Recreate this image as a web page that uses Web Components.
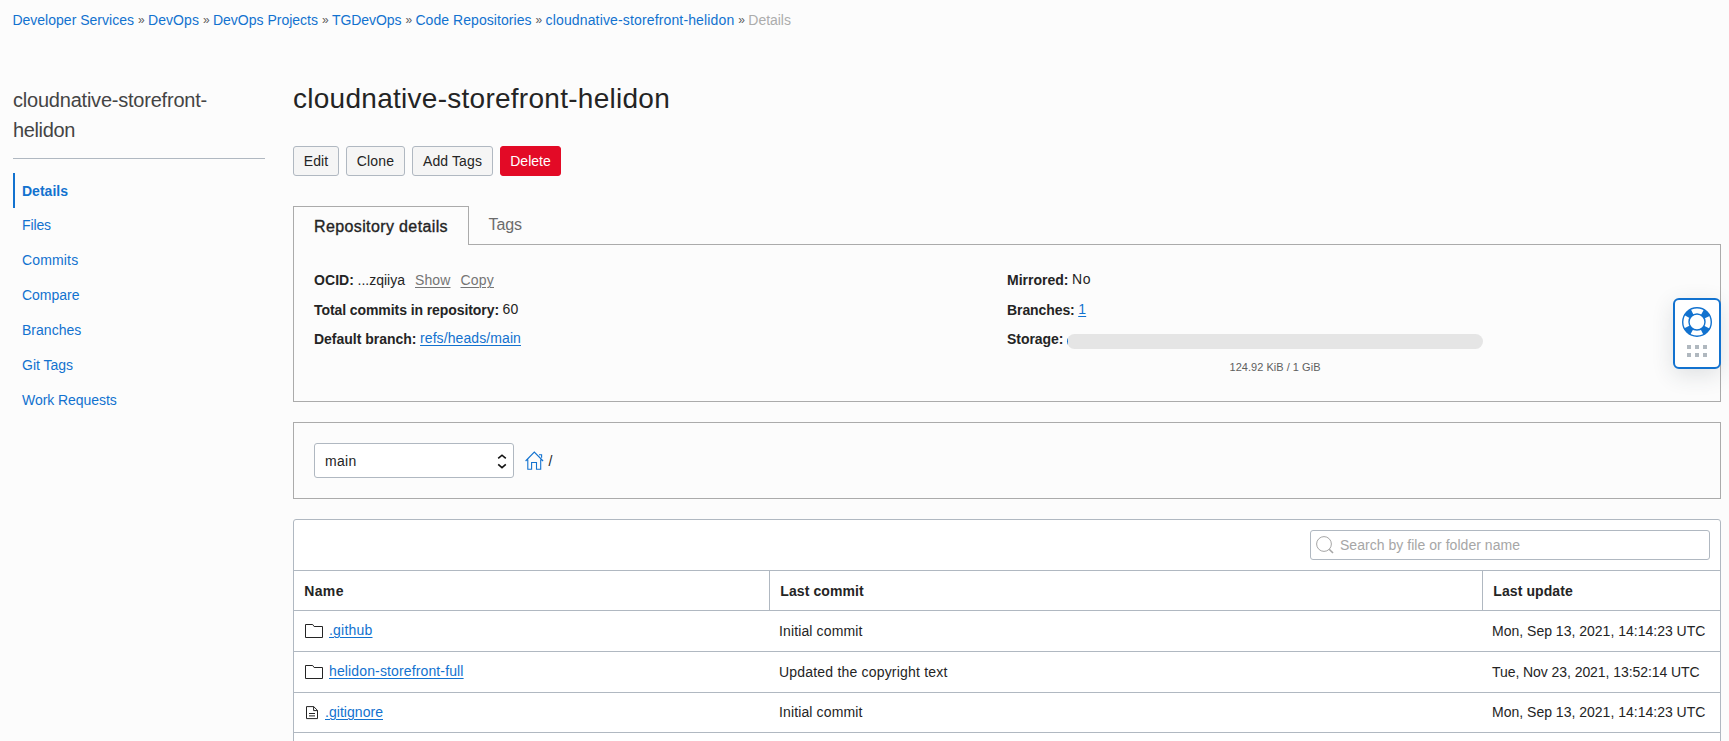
<!DOCTYPE html>
<html lang="en">
<head>
<meta charset="utf-8">
<title>cloudnative-storefront-helidon</title>
<style>
html,body{margin:0;height:100%;overflow:hidden}
body{background:#fcfcfc;color:#242424;font:14px/20px "Liberation Sans",Arial,sans-serif}
</style>
</head>
<body>
<repo-page></repo-page>
<script>
const make = (name, html, init) => customElements.define(name, class extends HTMLElement {
  connectedCallback() {
    if (this.shadowRoot) return;
    const t = document.createElement('template');
    t.innerHTML = html;
    this.attachShadow({mode: 'open'}).append(t.content.cloneNode(true));
    if (init) init(this, this.shadowRoot);
  }
});

/* Single-line label whose tracking is adjusted to a given width. */
make('fit-text', `<style>:host{display:inline-block;white-space:nowrap;flex:none}span{display:inline-block}
:host([link]) span{color:#1272cf}
:host([underline]) span{text-decoration:underline;text-underline-offset:2px;text-decoration-thickness:1px}</style><span><slot></slot></span>`, (el, root) => {
  const s = root.querySelector('span'), w = +el.getAttribute('w');
  if (!w) return;
  const n = el.textContent.length;
  s.style.letterSpacing = ((w - s.getBoundingClientRect().width) / n) + 'px';
  el.style.width = w + 'px';
});

make('bread-crumbs', `<style>:host{display:flex;height:20px;padding:10px 0 0 12.4px;gap:4px}
.s{width:6px;color:#5c5c5c;font-size:12px;text-align:center}.c{color:#acacac}</style>
<fit-text link w="121.6">Developer Services</fit-text><span class="s">»</span>
<fit-text link w="51">DevOps</fit-text><span class="s">»</span>
<fit-text link w="105">DevOps Projects</fit-text><span class="s">»</span>
<fit-text link w="69.4">TGDevOps</fit-text><span class="s">»</span>
<fit-text link w="116.2">Code Repositories</fit-text><span class="s">»</span>
<fit-text link w="188.8">cloudnative-storefront-helidon</fit-text><span class="s">»</span>
<fit-text class="c" w="42.5">Details</fit-text>`);

make('nav-item', `<style>:host{display:block;height:35px;line-height:35px;padding-left:9px;color:#1272cf;box-sizing:border-box}
:host([active]){border-left:2px solid #1272cf;padding-left:7px;font-weight:bold;line-height:36px}</style><slot></slot>`);

make('side-nav', `<style>:host{display:block;width:252px;margin-left:13px;padding-top:55px}
h2{margin:0;font-size:20px;line-height:30px;font-weight:300;color:#444;height:73px;border-bottom:1px solid #b0b8c1;margin-bottom:14px}
h2 fit-text{display:block}</style>
<h2><fit-text w="194">cloudnative-storefront-</fit-text><fit-text w="62">helidon</fit-text></h2>
<nav-item active><fit-text w="46">Details</fit-text></nav-item>
<nav-item><fit-text w="29">Files</fit-text></nav-item>
<nav-item><fit-text w="56.3">Commits</fit-text></nav-item>
<nav-item><fit-text w="57.5">Compare</fit-text></nav-item>
<nav-item><fit-text w="59.3">Branches</fit-text></nav-item>
<nav-item><fit-text w="51">Git Tags</fit-text></nav-item>
<nav-item><fit-text w="94.8">Work Requests</fit-text></nav-item>`);

make('action-button', `<style>:host{display:flex;justify-content:center;box-sizing:border-box;height:30px;line-height:29px;border:1px solid #b0b8c1;border-radius:3px;background:#f5f5f5;color:#242424}
:host([danger]){background:#e30a26;border-color:#e30a26;color:#fff}</style><slot></slot>`);

make('detail-row', `<style>:host{display:flex;height:var(--h,30px);line-height:20px;gap:3.5px}
::slotted([slot=label]){font-weight:bold}.v{display:flex;gap:10px;margin-top:var(--lift,-1px)}</style>
<slot name="label"></slot><span class="v"><slot></slot></span>`);

make('tab-panel', `<style>:host{display:block}
.tabs{display:flex;height:39px}
.on{box-sizing:border-box;width:176px;height:39px;border:1px solid #ababab;border-bottom:0;padding:9px 0 0 20px;font-size:16px;line-height:22px;-webkit-text-stroke:.35px #242424}
.off{flex:1;box-sizing:border-box;height:39px;border-bottom:1px solid #ababab;padding:8px 0 0 19.6px;font-size:16px;line-height:22px;color:#6b6b6b}
.body{box-sizing:border-box;height:157px;border:1px solid #ababab;border-top:0;padding:25px 0 0 20px;display:grid;grid-template-columns:693px 1fr}
.g{color:#757575}
.use{width:416px;margin-top:6px}
.bar{height:15px;border-radius:8px;background:linear-gradient(90deg,#1272cf 1px,#e5e5e5 1px)}
.cap{display:flex;justify-content:center;margin-top:8px;font-size:11px;line-height:20px;color:#5f5f5f}</style>
<div class="tabs"><div class="on"><fit-text w="134">Repository details</fit-text></div><div class="off"><fit-text w="33.3">Tags</fit-text></div></div>
<div class="body"><div>
<detail-row style="--lift:0px"><fit-text slot="label" w="40">OCID:</fit-text><fit-text w="47.5">...zqiiya</fit-text><fit-text class="g" underline w="35.5">Show</fit-text><fit-text class="g" underline w="33.5">Copy</fit-text></detail-row>
<detail-row style="--h:29px"><fit-text slot="label" w="185">Total commits in repository:</fit-text><fit-text w="16">60</fit-text></detail-row>
<detail-row><fit-text slot="label" w="102.5">Default branch:</fit-text><fit-text link underline w="101">refs/heads/main</fit-text></detail-row>
</div><div>
<detail-row><fit-text slot="label" w="61.5">Mirrored:</fit-text><fit-text w="19">No</fit-text></detail-row>
<detail-row style="--h:29px"><fit-text slot="label" w="67.7">Branches:</fit-text><fit-text link underline w="8">1</fit-text></detail-row>
<detail-row><fit-text slot="label" w="56.5">Storage:</fit-text><div class="use"><div class="bar"></div><div class="cap"><fit-text w="91">124.92 KiB / 1 GiB</fit-text></div></div></detail-row>
</div></div>`);

make('branch-bar', `<style>:host{display:flex;box-sizing:border-box;height:77px;margin-top:20px;border:1px solid #ababab;padding:20px;align-items:flex-start}
.sel{box-sizing:border-box;width:200px;height:35px;border:1px solid #b0b8c1;border-radius:3px;background:#fff;display:flex;justify-content:space-between;line-height:35px;padding:0 6px 0 10px}
.sel svg{margin-top:10px}.home{margin:8px 0 0 10.6px}.sl{margin-left:5px;line-height:36px}</style>
<div class="sel"><fit-text w="31.5">main</fit-text><svg width="10" height="15" viewBox="0 0 10 15" fill="none" stroke="#111" stroke-width="1.6"><path d="M1.2 4.4 5 1.2l3.8 3.2M1.2 10.4 5 13.6l3.8-3.2"/></svg></div>
<svg class="home" width="19" height="19" viewBox="0 0 19 19" fill="none" stroke="#1272cf" stroke-width="1.1"><path d="M.6 10 9.3 1l8.8 9M2.8 8.5v9.7h3.8v-6.7h4.9v6.7h4.2V8.5M14 3.8h2.6v3"/></svg><span class="sl">/</span>`);

make('search-box', `<style>:host{display:flex;box-sizing:border-box;width:400px;height:30px;border:1px solid #b0b8c1;border-radius:3px;background:#fff;color:#a6a6a6;line-height:29px}
svg{margin:5px 6px 0 5px}</style>
<svg width="18" height="18" viewBox="0 0 18 18" fill="none" stroke="#a6a6a6"><circle cx="8" cy="8" r="7.4"/><path d="m13.2 13.2 3.8 3.8" stroke-width="1.6"/></svg><fit-text w="180">Search by file or folder name</fit-text>`);

make('file-row', `<style>:host{display:grid;grid-template-columns:476px 713px 1fr;box-sizing:border-box;height:41px;line-height:41px;border-bottom:1px solid #b0b8c1}
:host([short]){height:40px;line-height:39px}
.n{display:flex;padding-left:11px;line-height:39px;gap:5px}:host([short]) .n{gap:6px}
::slotted([slot=c]),::slotted([slot=d]){padding-left:9px}
svg{margin-top:13px;flex:none}:host([short]) svg{margin-top:13px}</style>
<div class="n"></div><slot name="c"></slot><slot name="d"></slot>`, (el, root) => {
  const icon = el.hasAttribute('short')
    ? '<svg width="14" height="14" viewBox="0 0 14 14" fill="none" stroke="#242424"><path d="M1.5.6h7.2l3.8 3.8v8.2h-11zM8.6.6v4h3.9M4 7.5h6M4 9.9h6"/></svg>'
    : '<svg width="19" height="15" viewBox="0 0 19 15" fill="none" stroke="#242424"><path d="M.5.5h7.2l1.4 2h8.4v11H.5z"/></svg>';
  root.querySelector('.n').innerHTML = icon + '<slot></slot>';
});

make('file-table', `<style>:host{display:block;box-sizing:border-box;height:240px;margin-top:20px;border:1px solid #b0b8c1;border-radius:3px;background:#fff}
.top{display:flex;justify-content:flex-end;padding:10px 10px 0 0;height:40px;border-bottom:1px solid #b0b8c1}
.head{display:grid;grid-template-columns:476px 713px 1fr;height:39px;line-height:41px;font-weight:bold;border-bottom:1px solid #b0b8c1}
.head div{padding-left:10.3px;border-right:1px solid #b0b8c1;box-sizing:border-box;height:39px}.head div:last-child{border:0}</style>
<div class="top"><search-box></search-box></div>
<div class="head"><div><fit-text w="39.5">Name</fit-text></div><div><fit-text w="83.5">Last commit</fit-text></div><div><fit-text w="79.5">Last update</fit-text></div></div>
<file-row><fit-text link underline w="43.5">.github</fit-text><fit-text slot="c" w="83.5">Initial commit</fit-text><fit-text slot="d" w="213.4">Mon, Sep 13, 2021, 14:14:23 UTC</fit-text></file-row>
<file-row><fit-text link underline w="134.6">helidon-storefront-full</fit-text><fit-text slot="c" w="168.5">Updated the copyright text</fit-text><fit-text slot="d" w="207.6">Tue, Nov 23, 2021, 13:52:14 UTC</fit-text></file-row>
<file-row short><fit-text link underline w="58">.gitignore</fit-text><fit-text slot="c" w="83.5">Initial commit</fit-text><fit-text slot="d" w="213.4">Mon, Sep 13, 2021, 14:14:23 UTC</fit-text></file-row>`);

make('help-widget', `<style>:host{position:absolute;left:1673px;top:298px;box-sizing:border-box;width:48px;height:71px;border:2px solid #1272cf;border-radius:6px;background:#fff;box-shadow:0 6px 22px rgba(40,55,70,.14)}svg{display:block}</style>
<svg width="44" height="67" viewBox="0 0 44 67" fill="none" stroke="#1272cf"><circle cx="22" cy="22" r="11" stroke-width="7" stroke-dasharray="6.8 10.48" stroke-dashoffset="-5.24"/><circle cx="22" cy="22" r="14.3" stroke-width="1.4"/><circle cx="22" cy="22" r="8" stroke-width="1.4"/>
<path d="M12 45h4v4h-4zM20 45h4v4h-4zM28 45h4v4h-4zM12 53h4v4h-4zM20 53h4v4h-4zM28 53h4v4h-4z" fill="#b0b8bf" stroke="none"/></svg>`);

make('repo-page', `<style>:host{display:block;width:1729px;height:741px;position:relative;overflow:hidden}
.cols{display:flex}
main{width:1428px;margin-left:28px;padding-top:42px}
h1{margin:0;height:74px;font-size:28px;font-weight:400;line-height:53px}
.acts{display:flex;gap:7px;height:60px}</style>
<bread-crumbs></bread-crumbs>
<div class="cols"><side-nav></side-nav>
<main><h1><fit-text w="377">cloudnative-storefront-helidon</fit-text></h1>
<div class="acts"><action-button style="width:46px"><fit-text w="24.5">Edit</fit-text></action-button><action-button style="width:59px"><fit-text w="37.5">Clone</fit-text></action-button><action-button style="width:81px"><fit-text w="59">Add Tags</fit-text></action-button><action-button danger style="width:61px"><fit-text w="40.5">Delete</fit-text></action-button></div>
<tab-panel></tab-panel><branch-bar></branch-bar><file-table></file-table></main></div>
<help-widget></help-widget>`);
</script>
</body>
</html>
